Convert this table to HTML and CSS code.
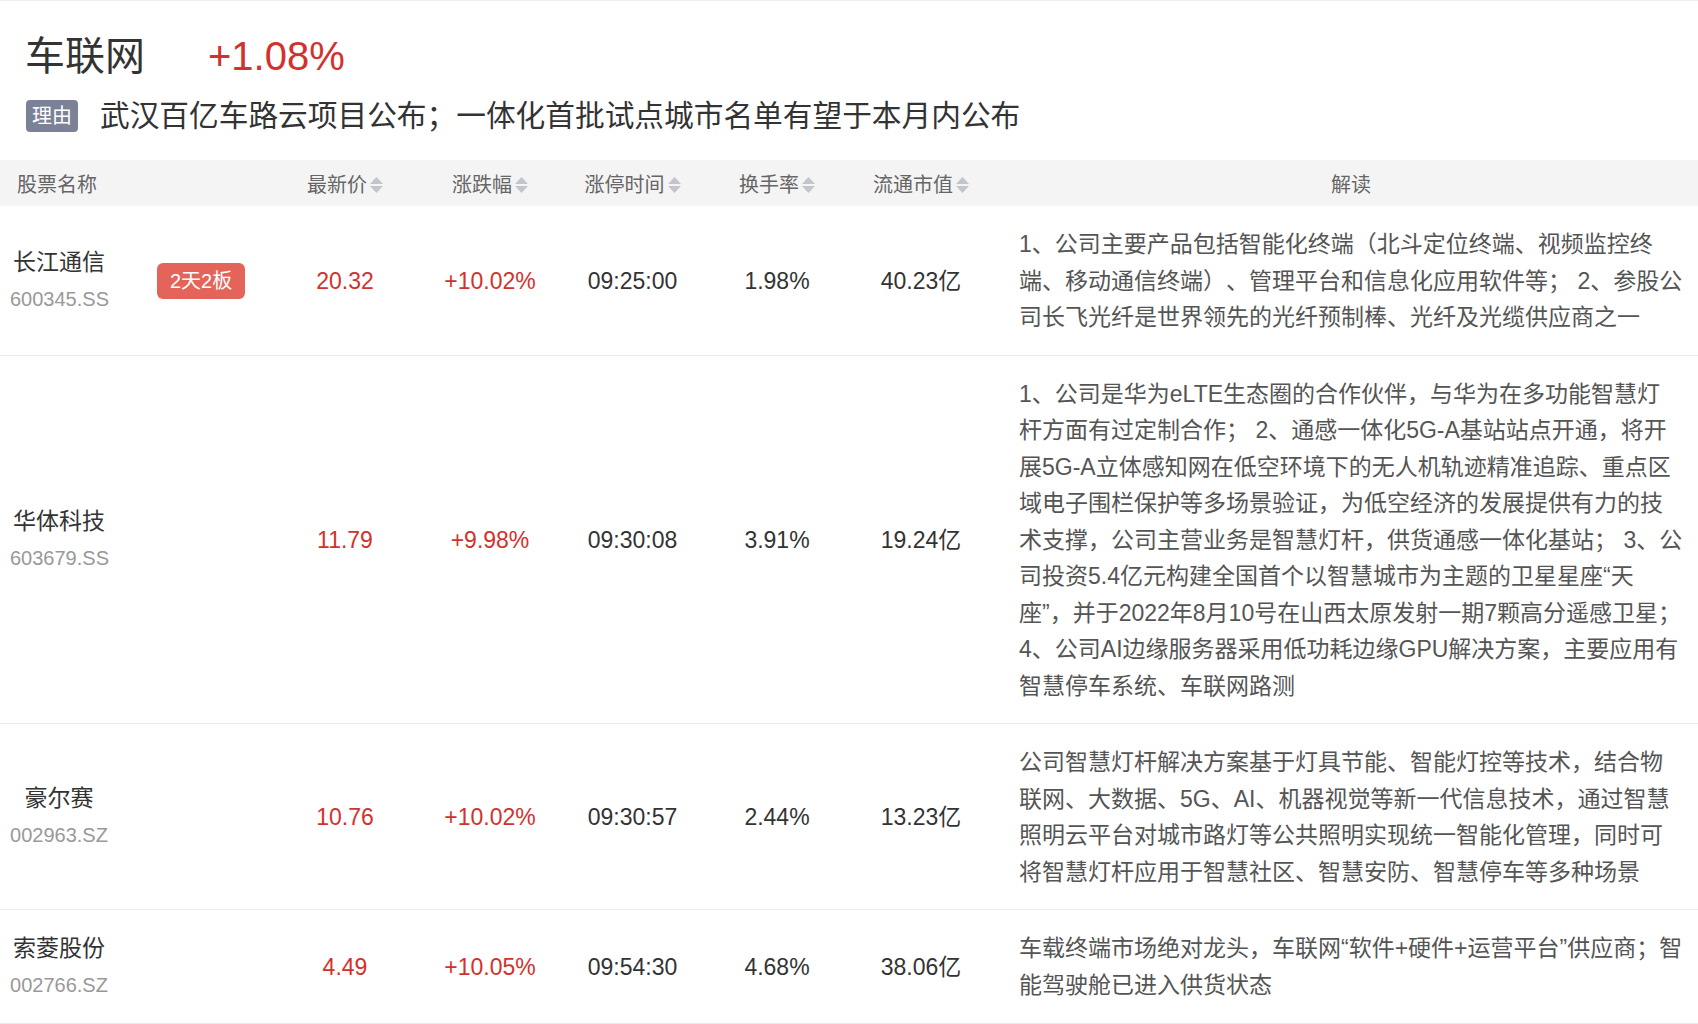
FILE: index.html
```html
<!DOCTYPE html>
<html lang="zh-CN">
<head>
<meta charset="utf-8">
<title>车联网</title>
<link rel="stylesheet" href="styles.css">
</head>
<body>
<div class="page">
  <section class="topic">
    <div class="topic-title">
      <h1 class="topic-name">车联网</h1>
      <span class="topic-change">+1.08%</span>
    </div>
    <div class="topic-reason">
      <span class="reason-tag">理由</span>
      <span class="reason-text">武汉百亿车路云项目公布；一体化首批试点城市名单有望于本月内公布</span>
    </div>
  </section>

  <div class="table">
    <div class="row head">
      <div class="cell name-cell">股票名称</div>
      <div class="cell"><span class="sort">最新价<svg class="sort-icon" viewBox="0 0 13 16"><path d="M6.5 0L13 7H0Z"/><path d="M0 9H13L6.5 16Z"/></svg></span></div>
      <div class="cell"><span class="sort">涨跌幅<svg class="sort-icon" viewBox="0 0 13 16"><path d="M6.5 0L13 7H0Z"/><path d="M0 9H13L6.5 16Z"/></svg></span></div>
      <div class="cell"><span class="sort">涨停时间<svg class="sort-icon" viewBox="0 0 13 16"><path d="M6.5 0L13 7H0Z"/><path d="M0 9H13L6.5 16Z"/></svg></span></div>
      <div class="cell"><span class="sort">换手率<svg class="sort-icon" viewBox="0 0 13 16"><path d="M6.5 0L13 7H0Z"/><path d="M0 9H13L6.5 16Z"/></svg></span></div>
      <div class="cell"><span class="sort">流通市值<svg class="sort-icon" viewBox="0 0 13 16"><path d="M6.5 0L13 7H0Z"/><path d="M0 9H13L6.5 16Z"/></svg></span></div>
      <div class="cell interp">解读</div>
    </div>

    <div class="row body">
      <div class="cell name-cell">
        <div class="stock"><div class="stock-name">长江通信</div><div class="stock-code">600345.SS</div></div>
        <span class="board-tag">2天2板</span>
      </div>
      <div class="cell up">20.32</div>
      <div class="cell up">+10.02%</div>
      <div class="cell">09:25:00</div>
      <div class="cell">1.98%</div>
      <div class="cell">40.23亿</div>
      <div class="cell interp">1、公司主要产品包括智能化终端（北斗定位终端、视频监控终端、移动通信终端）、管理平台和信息化应用软件等； 2、参股公司长飞光纤是世界领先的光纤预制棒、光纤及光缆供应商之一</div>
    </div>

    <div class="row body">
      <div class="cell name-cell">
        <div class="stock"><div class="stock-name">华体科技</div><div class="stock-code">603679.SS</div></div>
      </div>
      <div class="cell up">11.79</div>
      <div class="cell up">+9.98%</div>
      <div class="cell">09:30:08</div>
      <div class="cell">3.91%</div>
      <div class="cell">19.24亿</div>
      <div class="cell interp">1、公司是华为eLTE生态圈的合作伙伴，与华为在多功能智慧灯杆方面有过定制合作； 2、通感一体化5G-A基站站点开通，将开展5G-A立体感知网在低空环境下的无人机轨迹精准追踪、重点区域电子围栏保护等多场景验证，为低空经济的发展提供有力的技术支撑，公司主营业务是智慧灯杆，供货通感一体化基站； 3、公司投资5.4亿元构建全国首个以智慧城市为主题的卫星星座“天座”，并于2022年8月10号在山西太原发射一期7颗高分遥感卫星； 4、公司AI边缘服务器采用低功耗边缘GPU解决方案，主要应用有智慧停车系统、车联网路测</div>
    </div>

    <div class="row body">
      <div class="cell name-cell">
        <div class="stock"><div class="stock-name">豪尔赛</div><div class="stock-code">002963.SZ</div></div>
      </div>
      <div class="cell up">10.76</div>
      <div class="cell up">+10.02%</div>
      <div class="cell">09:30:57</div>
      <div class="cell">2.44%</div>
      <div class="cell">13.23亿</div>
      <div class="cell interp">公司智慧灯杆解决方案基于灯具节能、智能灯控等技术，结合物联网、大数据、5G、AI、机器视觉等新一代信息技术，通过智慧照明云平台对城市路灯等公共照明实现统一智能化管理，同时可将智慧灯杆应用于智慧社区、智慧安防、智慧停车等多种场景</div>
    </div>

    <div class="row body">
      <div class="cell name-cell">
        <div class="stock"><div class="stock-name">索菱股份</div><div class="stock-code">002766.SZ</div></div>
      </div>
      <div class="cell up">4.49</div>
      <div class="cell up">+10.05%</div>
      <div class="cell">09:54:30</div>
      <div class="cell">4.68%</div>
      <div class="cell">38.06亿</div>
      <div class="cell interp">车载终端市场绝对龙头，车联网“软件+硬件+运营平台”供应商；智能驾驶舱已进入供货状态</div>
    </div>
  </div>
</div>
</body>
</html>
```

FILE: styles.css
```css
* {
  box-sizing: border-box;
  margin: 0;
  padding: 0;
}

body {
  margin: 0;
  background: #fff;
  color: #333;
  font-family: "Liberation Sans", "Noto Sans CJK SC", sans-serif;
  text-spacing-trim: space-all;
  text-autospace: no-autospace;
}

.page {
  width: 1698px;
  border-top: 1px solid #eeeeee;
}

/* ---------- topic header ---------- */
.topic {
  padding: 31px 0 26px 25px;
}

.topic-title {
  display: flex;
  align-items: center;
  height: 48px;
}

.topic-name {
  font-size: 40px;
  font-weight: normal;
  line-height: 48px;
  color: #333;
}

.topic-change {
  margin-left: 63px;
  font-size: 40px;
  line-height: 48px;
  color: #d3312c;
}

.topic-reason {
  display: flex;
  align-items: center;
  height: 36px;
  margin-top: 18px;
}

.reason-tag {
  width: 52px;
  height: 32px;
  margin-left: 1px;
  border-radius: 4px;
  background: #7b8197;
  color: #fff;
  font-size: 20px;
  line-height: 32px;
  text-align: center;
}

.reason-text {
  margin-left: 22px;
  font-size: 29.7px;
  line-height: 36px;
  color: #333;
}

/* ---------- table ---------- */
.row {
  display: grid;
  grid-template-columns: 275px 140px 150px 135px 154px 134px 1fr;
  border-bottom: 1px solid #ebebeb;
}

.cell {
  display: flex;
  align-items: center;
  justify-content: center;
}

.head {
  height: 46px;
  padding-top: 4px;
  background: #f4f4f4;
  border-bottom: none;
  font-size: 20px;
  line-height: 28px;
  color: #666;
}

.head .name-cell {
  justify-content: flex-start;
  padding-left: 17px;
}

.sort {
  display: inline-flex;
  align-items: center;
  white-space: nowrap;
}

.sort-icon {
  width: 13px;
  height: 16px;
  margin-left: 3px;
  fill: #c2c5cc;
}

.body {
  padding: 20px 0 19px;
  font-size: 23px;
  line-height: 36px;
  color: #333;
}

.body .name-cell {
  justify-content: flex-start;
  padding-left: 10px;
}

.stock {
  width: 98px;
  text-align: center;
}

.stock-name {
  font-size: 23px;
  line-height: 36px;
  color: #333;
}

.stock-code {
  font-size: 20px;
  line-height: 38px;
  color: #999;
}

.board-tag {
  margin-left: 49px;
  height: 36px;
  padding: 0 13px;
  border-radius: 6px;
  background: #e5645a;
  color: #fff;
  font-size: 20px;
  line-height: 36px;
  white-space: nowrap;
}

.up {
  color: #d3312c;
}

.interp {
  display: block;
  padding: 0 15px 0 31px;
  font-size: 23px;
  line-height: 36.5px;
  color: #555;
  text-align: left;
}

.head .interp {
  display: flex;
  justify-content: center;
  font-size: 20px;
  line-height: 28px;
  color: #666;
}
```
